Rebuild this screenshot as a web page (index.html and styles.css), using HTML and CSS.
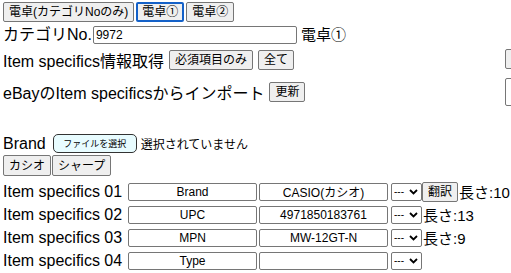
FILE: index.html
```html
<!DOCTYPE html>
<html lang="ja">
<head>
    <meta charset="UTF-8">
    <meta name="viewport" content="width=device-width, initial-scale=1.0">
    <title>Item specifics</title>
    <link rel="stylesheet" href="styles.css">
</head>
<body>
    <div class="tabs">
        <button class="btn">電卓(カテゴリNoのみ)</button><button class="btn active">電卓①</button><button class="btn">電卓②</button>
    </div>
    <div class="cat-row">
        <label for="category">カテゴリNo.</label>
        <input type="text" id="category" class="cat-input" value="9972">
        <span class="cat-name">電卓①</span>
    </div>
    <div class="panel">
        <div class="line">
            <span>Item specifics情報取得</span>
            <button class="btn">必須項目のみ</button>
            <button class="btn">全て</button>
        </div>
        <div class="side"><button class="btn side-btn"></button></div>
        <div class="line">
            <span>eBayのItem specificsからインポート</span>
            <button class="btn">更新</button>
        </div>
        <div class="side"><textarea class="side-area"></textarea></div>
    </div>
    <div class="brand-row">
        <span>Brand</span>
        <button class="file-btn">ファイルを選択</button>
        <span class="file-name">選択されていません</span>
    </div>
    <div class="brands">
        <button class="btn">カシオ</button><button class="btn">シャープ</button>
    </div>
    <div id="specifics">
        <div class="spec">
            <span class="spec-label">Item specifics 01</span>
            <input type="text" class="spec-input" value="Brand">
            <input type="text" class="spec-input" value="CASIO(カシオ)">
            <select class="spec-select"><option>---</option></select>
            <button class="btn">翻訳</button>
            <span class="len">長さ:10</span>
        </div>
        <div class="spec">
            <span class="spec-label">Item specifics 02</span>
            <input type="text" class="spec-input" value="UPC">
            <input type="text" class="spec-input" value="4971850183761">
            <select class="spec-select"><option>---</option></select>
            <span class="len">長さ:13</span>
        </div>
        <div class="spec">
            <span class="spec-label">Item specifics 03</span>
            <input type="text" class="spec-input" value="MPN">
            <input type="text" class="spec-input" value="MW-12GT-N">
            <select class="spec-select"><option>---</option></select>
            <span class="len">長さ:9</span>
        </div>
        <div class="spec">
            <span class="spec-label">Item specifics 04</span>
            <input type="text" class="spec-input" value="Type">
            <input type="text" class="spec-input" value="">
            <select class="spec-select"><option>---</option></select>
        </div>
        <div class="spec">
            <span class="spec-label"></span>
            <input type="text" class="spec-input" value="">
            <input type="text" class="spec-input" value="">
        </div>
    </div>
</body>
</html>
```

FILE: styles.css
```css
body {
    font-family: "Liberation Sans", "Noto Sans CJK JP", sans-serif;
    font-size: 16px;
    margin: 0;
    padding: 0 0 0 3px;
    color: #000;
    background-color: #fff;
    overflow: hidden;
}
.btn {
    font-family: "Liberation Sans", "Noto Sans CJK JP", sans-serif;
    font-size: 12px;
    line-height: 16px;
    height: 20px;
    padding: 0 5px;
    margin: 0;
    flex-shrink: 0;
    white-space: nowrap;
    background-color: #efefef;
    border: 1px solid #767676;
    border-radius: 2px;
    color: #000;
}
.btn.active {
    border: 2px solid #1461c8;
    padding: 0 4px;
}
.tabs {
    display: flex;
    gap: 2px;
    margin-top: 2px;
}
.cat-row {
    display: flex;
    align-items: center;
    height: 18px;
    margin-top: 4px;
    line-height: 18px;
}
.cat-input {
    width: 204px;
    height: 18px;
    box-sizing: border-box;
    margin: 0 4px 0 1px;
    padding: 0 2px;
    font-size: 12px;
    border: 1px solid #767676;
    border-radius: 2px;
}
.cat-name {
    font-size: 15px;
}
.panel {
    display: grid;
    grid-template-columns: 502px 40px;
    row-gap: 6px;
    margin-top: 4px;
    align-items: center;
}
.line {
    display: flex;
    align-items: center;
    gap: 5px;
    white-space: nowrap;
}
.side-btn {
    width: 40px;
}
.side-area {
    display: block;
    width: 40px;
    height: 28px;
    box-sizing: border-box;
    margin: 0;
    border: 1px solid #767676;
    border-radius: 2px;
    resize: none;
}
.brand-row {
    display: flex;
    align-items: center;
    gap: 4px;
    margin-top: 28px;
    height: 19px;
}
.file-btn {
    font-family: "Liberation Sans", "Noto Sans CJK JP", sans-serif;
    font-size: 9px;
    width: 84px;
    height: 19px;
    margin-left: 3px;
    padding: 0;
    background-color: #e8fcff;
    border: 1px solid #333;
    border-radius: 5px;
    color: #000;
}
.file-name {
    font-size: 12px;
}
.brands {
    display: flex;
    gap: 1px;
    margin-top: 2px;
}
.brands .btn {
    height: 21px;
}
#specifics {
    margin-top: 4px;
}
.spec {
    display: flex;
    align-items: center;
    height: 23px;
    white-space: nowrap;
}
.spec-label {
    width: 125px;
    flex-shrink: 0;
}
.spec-input {
    width: 129px;
    height: 18px;
    flex-shrink: 0;
    box-sizing: border-box;
    margin: 0 2px 0 0;
    padding: 0 2px;
    font-family: "Liberation Sans", "Noto Sans CJK JP", sans-serif;
    font-size: 12px;
    text-align: center;
    border: 1px solid #767676;
    border-radius: 2px;
}
.spec-select {
    appearance: none;
    width: 31px;
    height: 18px;
    flex-shrink: 0;
    box-sizing: border-box;
    margin: 0 0 0 1px;
    padding: 0 0 0 2px;
    font-size: 10px;
    border: 1px solid #767676;
    border-radius: 2px;
    background: #fff url("data:image/svg+xml;utf8,<svg xmlns='http://www.w3.org/2000/svg' width='9' height='6'><path d='M1 1l3.5 3.5L8 1' fill='none' stroke='black' stroke-width='1.8'/></svg>") no-repeat right 3px center;
}
.len {
    margin-left: 1px;
    flex-shrink: 0;
    font-size: 15px;
}
```
